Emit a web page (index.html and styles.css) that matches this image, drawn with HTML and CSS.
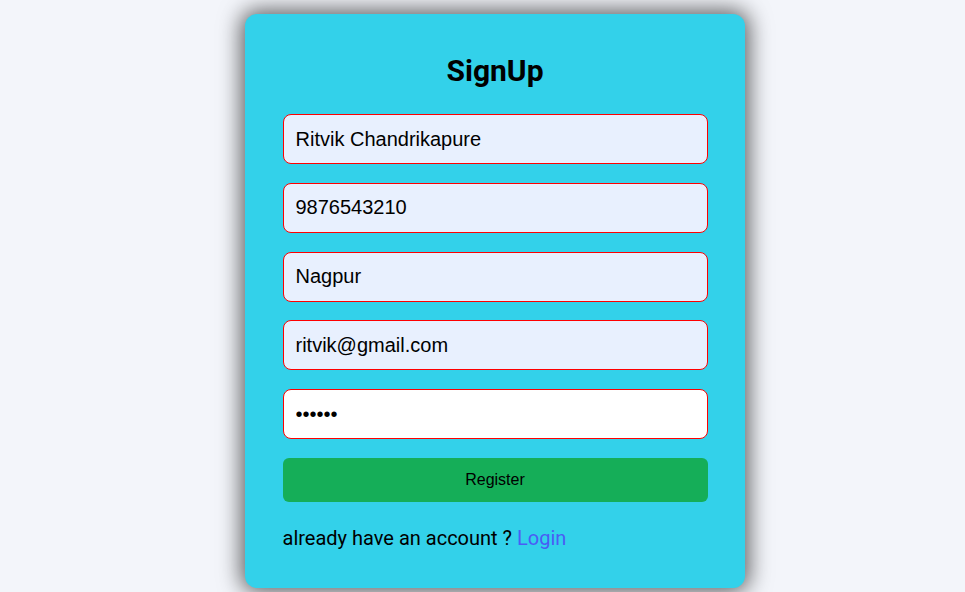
FILE: index.html
```html
<!DOCTYPE html>
<html lang="en">
<head>
<meta charset="utf-8">
<title>SignUp</title>
<link rel="stylesheet" href="styles.css">
</head>
<body>
<main class="page">
  <form class="card">
    <h1 class="title">SignUp</h1>
    <div class="fields">
      <input class="field autofill" type="text" value="Ritvik Chandrikapure">
      <input class="field autofill" type="text" value="9876543210">
      <input class="field autofill" type="text" value="Nagpur">
      <input class="field autofill" type="email" value="ritvik@gmail.com">
      <input class="field" type="password" value="123456">
      <button class="btn" type="button">Register</button>
    </div>
    <p class="foot">already have an account ? <a class="link" href="#">Login</a></p>
  </form>
</main>
</body>
</html>
```
FILE: styles.css
```css
* { box-sizing: border-box; }
html, body { margin: 0; padding: 0; }
body {
  background: #f3f5fa;
  font-family: Roboto, "Liberation Sans", sans-serif;
  height: 592px;
  overflow: hidden;
}
.page {
  display: flex;
  justify-content: center;
  padding-top: 14px;
  padding-left: 25px;
}
.card {
  width: 500px;
  height: 574px;
  background: #33d1ea;
  border-radius: 12px;
  box-shadow: 0 0 22px 4px rgba(0, 0, 0, 0.62);
  display: flex;
  flex-direction: column;
  align-items: center;
  padding-top: 40px;
}
.title {
  margin: 0;
  font-family: Roboto, sans-serif;
  font-weight: 700;
  font-size: 30px;
  line-height: 33px;
  color: #000;
}
.fields {
  width: 425px;
  margin-top: 27px;
  display: flex;
  flex-direction: column;
  gap: 18.75px;
}
.field {
  width: 100%;
  height: 50px;
  border: 1px solid #ff0000;
  border-radius: 8px;
  background: #ffffff;
  padding: 0 12px;
  font-family: "Liberation Sans", Arial, sans-serif;
  font-size: 20px;
  color: #000;
  outline: none;
}
.field.autofill { background: #e8f0fe; }
.btn {
  width: 100%;
  height: 44px;
  border: none;
  border-radius: 6px;
  background: #15ae58;
  font-family: "Liberation Sans", Arial, sans-serif;
  font-size: 16px;
  color: #000;
  padding: 0;
}
.foot {
  width: 425px;
  margin: 24px 0 0;
  font-family: Roboto, sans-serif;
  font-size: 20px;
  line-height: 24px;
  color: #000;
}
.link {
  color: #4a5cf5;
  text-decoration: none;
}
```
